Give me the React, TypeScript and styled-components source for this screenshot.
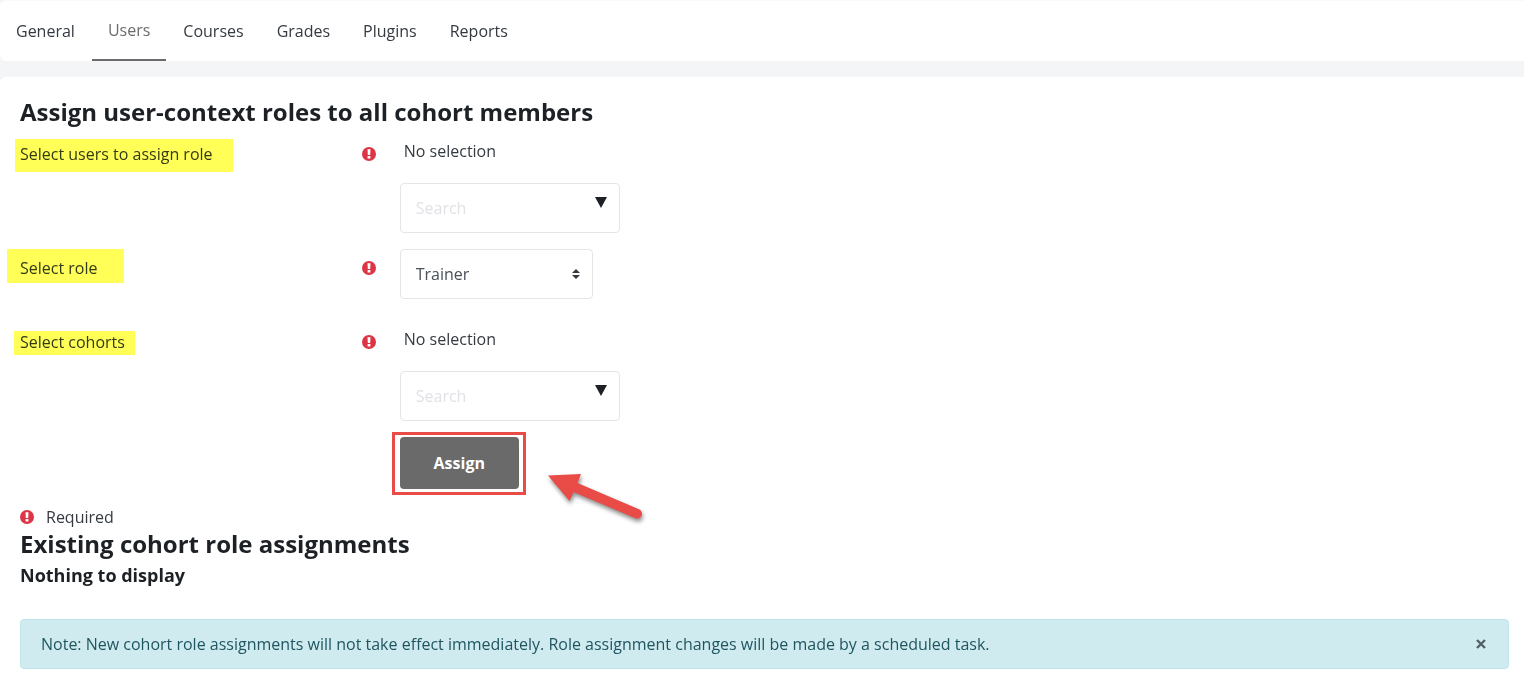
import React from "react";
import styled, { createGlobalStyle } from "styled-components";

const GlobalStyle = createGlobalStyle`
  *, *::before, *::after { box-sizing: border-box; }
  body {
    margin: 0;
    background: #f4f5f7;
    color: #343a40;
    font-family: "Open Sans", "Noto Sans", sans-serif;
    font-size: 16px;
    line-height: 24px;
  }
  button, input, select { font: inherit; margin: 0; }
`;

const Page = styled.div`
  display: flex;
  flex-direction: column;
  gap: 16px;
  min-height: 100vh;
`;

const TabBar = styled.nav`
  display: flex;
  gap: 1px;
  height: 61px;
  background: #fff;
  border-top: 1px solid #fafafb;
  border-radius: 6px 0 0 6px;
`;

const Tab = styled.a<{ $active?: boolean }>`
  display: flex;
  align-items: center;
  padding: 0 16px;
  color: ${(p) => (p.$active ? "#6c6a6d" : "#343a40")};
  border-bottom: ${(p) => (p.$active ? "2px solid #6c6a6d" : "0")};
  text-decoration: none;
`;

const Panel = styled.main`
  flex: 1;
  padding: 20px 15px 14px 20px;
  background: #fff;
  border-radius: 6px 0 0 0;
`;

const Title = styled.h2`
  margin: 0;
  color: #1d2125;
  font-size: 24px;
  line-height: 30px;
  font-weight: 700;
`;

const Subtitle = styled.h3`
  margin: 4px 0 32px;
  color: #1d2125;
  font-size: 18px;
  line-height: 24px;
  font-weight: 700;
`;

const Form = styled.form`
  padding-top: 12px;
`;

const Row = styled.div<{ $gap: number }>`
  display: grid;
  grid-template-columns: 25% 75%;
  margin: 0 -15px ${(p) => p.$gap}px;
`;

const LabelCell = styled.div<{ $top: number }>`
  display: flex;
  justify-content: space-between;
  align-items: flex-start;
  padding: ${(p) => p.$top}px 9px 0 15px;
`;

const FieldLabel = styled.label`
  position: relative;
`;

const Marker = styled.span<{ $inset: string }>`
  position: absolute;
  inset: ${(p) => p.$inset};
  background: #ffff57;
  mix-blend-mode: multiply;
  pointer-events: none;
`;

const FieldCell = styled.div`
  padding: 0 15px;
`;

const Selection = styled.div`
  margin-bottom: 20px;
  padding: 0 4px;
`;

const Control = styled.div<{ $width: number }>`
  position: relative;
  width: ${(p) => p.$width}px;
  max-width: 100%;
`;

const SearchInput = styled.input`
  display: block;
  width: 100%;
  height: 50px;
  padding: 0 40px 0 15px;
  color: #495057;
  background: #fff;
  border: 1px solid #e4e5e8;
  border-radius: 4px;
  &::placeholder { color: #e1e2e6; opacity: 1; }
`;

const RoleSelect = styled.select`
  display: block;
  width: 100%;
  height: 50px;
  padding: 0 32px 0 15px;
  color: #495057;
  background: #fff;
  border: 1px solid #e4e5e8;
  border-radius: 4px;
  appearance: none;
`;

const Indicator = styled.svg<{ $top: number }>`
  position: absolute;
  top: ${(p) => p.$top}px;
  right: 13px;
  pointer-events: none;
`;

const Framed = styled.div`
  position: relative;
  width: max-content;
`;

const Frame = styled.span`
  position: absolute;
  inset: -5px -7px -6px -8px;
  border: 3px solid #e94b46;
  pointer-events: none;
`;

const Pointer = styled.svg`
  position: absolute;
  left: 144px;
  top: 32px;
  overflow: visible;
  filter: drop-shadow(1px 3px 2px rgba(0, 0, 0, 0.45));
  pointer-events: none;
`;

const AssignButton = styled.button`
  display: block;
  width: 119px;
  height: 52px;
  padding: 0;
  color: #fff;
  background: #6a6a6a;
  border: 0;
  border-radius: 4px;
  font-weight: 700;
`;

const Required = styled.div`
  display: flex;
  align-items: center;
  gap: 12px;
`;

const RequiredMark = styled.svg<{ $inLabel?: boolean }>`
  flex: none;
  margin-top: ${(p) => (p.$inLabel ? 5 : 0)}px;
`;

const Alert = styled.div`
  display: flex;
  align-items: center;
  justify-content: space-between;
  min-height: 50px;
  padding: 0 20px;
  color: #1f5560;
  background: #d0ebef;
  border: 1px solid #bee5eb;
  border-radius: 4px;
`;

const CloseButton = styled.button`
  display: flex;
  padding: 2px;
  color: #536165;
  background: none;
  border: 0;
`;

function RequiredIcon({ inLabel }: { inLabel?: boolean }) {
  return (
    <RequiredMark $inLabel={inLabel} width="14" height="14" viewBox="0 0 14 14" role="img" aria-label="Required">
      <circle cx="7" cy="7" r="7" fill="#dc3545" />
      <path d="M5.5 2.2h3l-.3 5.9H5.8zM5.6 9.1h2.8v2.5H5.6z" fill="#fff" />
    </RequiredMark>
  );
}

function SearchField({ id }: { id: string }) {
  return (
    <>
      <Selection>No selection</Selection>
      <Control $width={220}>
        <SearchInput id={id} type="text" placeholder="Search" />
        <Indicator $top={14} width="12" height="11" viewBox="0 0 12 11" aria-hidden="true">
          <path d="M0 0h12L6 11z" fill="#1d2125" />
        </Indicator>
      </Control>
    </>
  );
}

interface FieldProps {
  id: string;
  label: string;
  top: number;
  gap: number;
  marker: string;
  children: React.ReactNode;
}

function Field({ id, label, top, gap, marker, children }: FieldProps) {
  return (
    <Row $gap={gap}>
      <LabelCell $top={top}>
        <FieldLabel htmlFor={id}>
          {label}
          <Marker $inset={marker} />
        </FieldLabel>
        <RequiredIcon inLabel />
      </LabelCell>
      <FieldCell>{children}</FieldCell>
    </Row>
  );
}

const tabs = ["General", "Users", "Courses", "Grades", "Plugins", "Reports"];

export default function App() {
  return (
    <>
      <GlobalStyle />
      <Page>
        <TabBar>
          {tabs.map((tab) => (
            <Tab key={tab} href="#" $active={tab === "Users"}>
              {tab}
            </Tab>
          ))}
        </TabBar>
        <Panel>
          <Title>Assign user-context roles to all cohort members</Title>
          <Form onSubmit={(e) => e.preventDefault()}>
            <Field id="users" label="Select users to assign role" top={3} gap={16} marker="-3px -20px -6px -5px">
              <SearchField id="users" />
            </Field>
            <Field id="role" label="Select role" top={7} gap={28} marker="-7px -26px -3px -13px">
              <Control $width={193}>
                <RoleSelect id="role" defaultValue="Trainer">
                  <option>Trainer</option>
                </RoleSelect>
                <Indicator $top={20} width="8" height="10" viewBox="0 0 4 5" aria-hidden="true">
                  <path d="M2 0L0 2h4zm0 5L0 3h4z" fill="#343a40" />
                </Indicator>
              </Control>
            </Field>
            <Field id="cohorts" label="Select cohorts" top={3} gap={16} marker="1px -10px -1px -6px">
              <SearchField id="cohorts" />
            </Field>
            <Row $gap={16}>
              <div />
              <FieldCell>
                <Framed>
                  <AssignButton type="submit">Assign</AssignButton>
                  <Frame />
                  <Pointer width="100" height="56" viewBox="545 469 100 56" aria-hidden="true">
                    <path
                      d="M549 475.5L582 474L578.5 483L640 509.3A4.8 4.8 0 0 1 636.4 518.2L574.5 492L570.5 501Z"
                      fill="#e94b46"
                    />
                  </Pointer>
                </Framed>
              </FieldCell>
            </Row>
          </Form>
          <Required>
            <RequiredIcon />
            <span>Required</span>
          </Required>
          <Title>Existing cohort role assignments</Title>
          <Subtitle>Nothing to display</Subtitle>
          <Alert role="alert">
            <span>
              Note: New cohort role assignments will not take effect immediately. Role assignment changes will be made
              by a scheduled task.
            </span>
            <CloseButton type="button" aria-label="Dismiss">
              <svg width="10" height="10" viewBox="0 0 10 10" aria-hidden="true">
                <path d="M1 1l8 8M9 1l-8 8" stroke="currentColor" strokeWidth="2.4" />
              </svg>
            </CloseButton>
          </Alert>
        </Panel>
      </Page>
    </>
  );
}
